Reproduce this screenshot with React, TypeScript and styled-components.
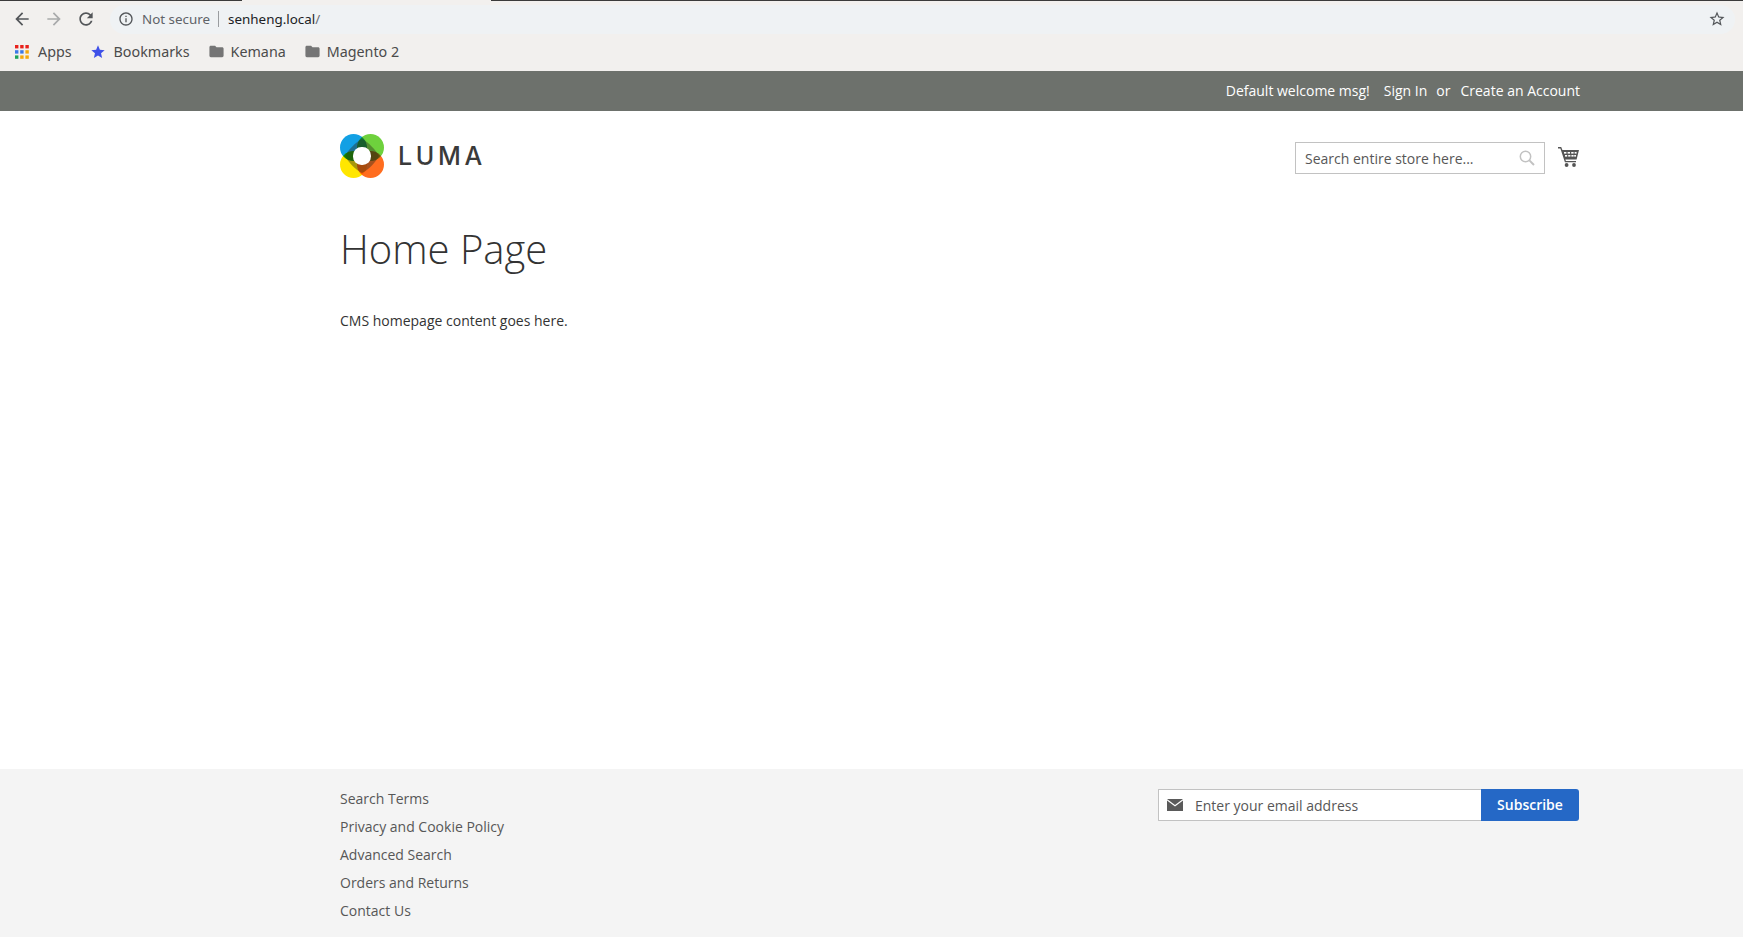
import React from 'react';
import styled, { createGlobalStyle } from 'styled-components';

const GlobalStyle = createGlobalStyle`
  html, body {
    margin: 0;
    padding: 0;
    background: #fff;
  }
  body {
    font-family: 'Open Sans', 'Noto Sans', sans-serif;
    font-size: 14px;
    color: #333;
  }
  * {
    box-sizing: border-box;
  }
`;

const Page = styled.div`
  display: flex;
  flex-direction: column;
  width: 1743px;
  height: 937px;
  overflow: hidden;
`;

const Browser = styled.div`
  flex: none;
  height: 71px;
  background: #f2f0ee;
  display: flex;
  flex-direction: column;
`;

const TabStrip = styled.div`
  height: 1px;
  display: flex;
  justify-content: space-between;
`;

const TabEdge = styled.div<{ $width: number }>`
  width: ${(p) => p.$width}px;
  background: #3b3b3b;
`;

const Toolbar = styled.div`
  height: 36px;
  display: flex;
  align-items: center;
  padding: 0 8px 0 12px;
`;

const NavButton = styled.span<{ $muted?: boolean }>`
  width: 20px;
  height: 20px;
  margin-right: 12px;
  display: flex;
  color: ${(p) => (p.$muted ? '#a9aaab' : '#535659')};
`;

const Omnibox = styled.div`
  flex: 1;
  height: 29px;
  margin-left: 2px;
  padding: 0 16px 0 8px;
  border-radius: 15px;
  background: #eff2f4;
  display: flex;
  align-items: center;
  font-family: 'Noto Sans', sans-serif;
  font-size: 13.4px;
`;

const InfoSlot = styled.span`
  width: 16px;
  height: 16px;
  display: flex;
  color: #535659;
`;

const StarSlot = styled.span`
  width: 18px;
  height: 18px;
  margin: 0 -7px 0 auto;
  display: flex;
  color: #535659;
`;

const Security = styled.span`
  margin-left: 8px;
  padding-right: 8px;
  border-right: 1px solid #9a9da0;
  line-height: 16px;
  color: #5f6368;
`;

const Host = styled.span`
  margin-left: 9px;
  color: #202124;
`;

const Path = styled.span`
  color: #6b6e72;
`;

const BookmarkBar = styled.div`
  height: 34px;
  display: flex;
  align-items: center;
  padding: 0 0 5px 15px;
  gap: 18px;
  font-family: 'Noto Sans', sans-serif;
  font-size: 14.3px;
  color: #4b4b4b;
`;

const Bookmark = styled.span<{ $gap?: number }>`
  display: flex;
  align-items: center;
  gap: ${(p) => p.$gap ?? 8}px;
`;

const BookmarkIcon = styled.span<{ $color: string }>`
  display: flex;
  color: ${(p) => p.$color};
`;

const Panel = styled.div`
  flex: none;
  height: 40px;
  background: #6d716c;
  color: #fff;
  padding: 0 163px 2px 340px;
  display: flex;
  justify-content: flex-end;
  align-items: center;
  gap: 10px;
`;

const PanelText = styled.span<{ $gap?: number }>`
  margin-right: ${(p) => p.$gap ?? 0}px;
`;

const Header = styled.header`
  flex: none;
  height: 113px;
  padding: 23px 164px 0 340px;
  display: flex;
  justify-content: space-between;
  align-items: flex-start;
`;

const Logo = styled.div`
  display: flex;
  align-items: center;
  gap: 14px;
`;

const LogoWord = styled.span`
  font-family: Inter, Lato, sans-serif;
  font-size: 25px;
  font-weight: 500;
  letter-spacing: 3.7px;
  line-height: 40px;
  color: #3a3a3a;
`;

const HeaderTools = styled.div`
  display: flex;
  align-items: flex-start;
  gap: 13px;
  padding-top: 8px;
`;

const CartSlot = styled.span`
  display: flex;
  padding-top: 4px;
`;

const SearchBox = styled.div`
  width: 250px;
  height: 32px;
  border: 1px solid #c2c2c2;
  background: #fff;
  padding: 0 9px;
  display: flex;
  align-items: center;
`;

const Field = styled.input`
  flex: 1;
  min-width: 0;
  border: 0;
  outline: 0;
  padding: 0;
  background: transparent;
  font-family: 'Open Sans', sans-serif;
  font-size: 14px;
  &::placeholder {
    color: #575757;
    opacity: 1;
  }
`;

const Main = styled.main`
  flex: 1;
  padding: 0 164px 0 340px;
`;

const Title = styled.h1`
  margin: 0 0 37px;
  font-size: 40px;
  font-weight: 300;
  line-height: 50px;
  color: #333;
`;

const Copy = styled.p`
  margin: 0;
  line-height: 20px;
`;

const Footer = styled.footer`
  flex: none;
  height: 168px;
  background: #f4f4f4;
  padding: 16px 164px 0 340px;
  display: flex;
  justify-content: space-between;
  align-items: flex-start;
`;

const FooterLinks = styled.ul`
  margin: 0;
  padding: 0;
  list-style: none;
`;

const FooterLink = styled.li`
  line-height: 28px;
  color: #575757;
`;

const Subscribe = styled.form`
  width: 421px;
  height: 32px;
  margin-top: 4px;
  display: flex;
`;

const EmailBox = styled.div`
  flex: 1;
  border: 1px solid #c2c2c2;
  border-right: 0;
  border-radius: 1px 0 0 1px;
  background: #fff;
  padding: 0 0 0 8px;
  display: flex;
  align-items: center;
  gap: 12px;
`;

const SubscribeButton = styled.button`
  width: 98px;
  border: 0;
  border-radius: 0 3px 3px 0;
  background: #2568c6;
  color: #fff;
  padding: 0 0 2px;
  font-family: 'Open Sans', sans-serif;
  font-size: 14px;
  font-weight: 600;
`;

const MarkSvg = styled.svg`
  isolation: isolate;
  .petal {
    mix-blend-mode: multiply;
  }
`;

function MaterialIcon({ d, size = 20 }: { d: string; size?: number }) {
  return (
    <svg width={size} height={size} viewBox="0 0 24 24" fill="currentColor">
      <path d={d} />
    </svg>
  );
}

const ARROW_BACK = 'M20 11H7.83l5.59-5.59L12 4l-8 8 8 8 1.41-1.41L7.83 13H20v-2z';
const ARROW_FORWARD = 'M4 11h12.17l-5.59-5.59L12 4l8 8-8 8-1.41-1.41L16.17 13H4v-2z';
const RELOAD =
  'M17.65 6.35C16.2 4.9 14.21 4 12 4c-4.42 0-7.99 3.58-7.99 8s3.57 8 7.99 8c3.73 0 6.84-2.55 7.73-6h-2.08c-.82 2.33-3.04 4-5.65 4-3.31 0-6-2.69-6-6s2.69-6 6-6c1.66 0 3.14.69 4.22 1.78L13 11h7V4l-2.35 2.35z';
const INFO =
  'M11 7h2v2h-2zm0 4h2v6h-2zm1-9C6.48 2 2 6.48 2 12s4.48 10 10 10 10-4.48 10-10S17.52 2 12 2zm0 18c-4.41 0-8-3.59-8-8s3.59-8 8-8 8 3.59 8 8-3.59 8-8 8z';
const STAR_OUTLINE =
  'M22 9.24l-7.19-.62L12 2 9.19 8.63 2 9.24l5.46 4.73L5.82 21 12 17.27 18.18 21l-1.63-7.03L22 9.24zM12 15.4l-3.76 2.27 1-4.28-3.32-2.88 4.38-.38L12 6.1l1.71 4.04 4.38.38-3.32 2.88 1 4.28L12 15.4z';
const STAR = 'M12 17.27L18.18 21l-1.64-7.03L22 9.24l-7.19-.61L12 2 9.19 8.63 2 9.24l5.46 4.73L5.82 21z';
const FOLDER =
  'M10 4H4c-1.1 0-1.99.9-1.99 2L2 18c0 1.1.9 2 2 2h16c1.1 0 2-.9 2-2V8c0-1.1-.9-2-2-2h-8l-2-2z';

function AppsIcon() {
  const colors = ['#e8211b', '#e8211b', '#e8211b', '#3b78e7', '#3b78e7', '#f4a80c', '#1da45a', '#f4a80c', '#f4a80c'];
  return (
    <svg width="14" height="14" viewBox="0 0 14 14">
      {colors.map((c, i) => (
        <rect key={i} x={(i % 3) * 5.2} y={Math.floor(i / 3) * 5.2} width="3.4" height="3.4" fill={c} />
      ))}
    </svg>
  );
}

function LumaMark() {
  return (
    <MarkSvg width="44" height="44" viewBox="0 0 44 44">
      <circle className="petal" cx="13.5" cy="13.5" r="13.5" fill="#12a0e4" />
      <circle className="petal" cx="30.5" cy="13.5" r="13.5" fill="#6ed13d" />
      <circle className="petal" cx="13.5" cy="30.5" r="13.5" fill="#ffe600" />
      <circle className="petal" cx="30.5" cy="30.5" r="13.5" fill="#ff6d1f" />
      <path
        d="M22 5C28 8 36 16 39 22C36 28 28 36 22 39C16 36 8 28 5 22C8 16 16 8 22 5Z"
        fill="#2e2a1c"
        opacity="0.42"
      />
      <rect x="13" y="13" width="18" height="18" rx="8.5" fill="#fff" />
    </MarkSvg>
  );
}

function SearchIcon() {
  return (
    <svg width="16" height="16" viewBox="0 0 16 16" fill="none" stroke="#c2c2c2" strokeWidth="1.5">
      <circle cx="6.5" cy="6.5" r="5.2" />
      <path d="M10.4 10.4L15 15" strokeWidth="2" />
    </svg>
  );
}

function CartIcon() {
  return (
    <svg width="21" height="21" viewBox="0 0 21 21" fill="#555">
      <path d="M0 1h3.2l1.2 3H21l-2.4 9.5H7.4l.5 1.5H18v1.3H6.9L2.4 2.4H0z" />
      <g fill="#fff">
        <rect x="6" y="6" width="2.4" height="1.6" />
        <rect x="9.6" y="6" width="2.4" height="1.6" />
        <rect x="13.2" y="6" width="2.4" height="1.6" />
        <rect x="16.6" y="6" width="2" height="1.6" />
        <rect x="7" y="9" width="2.2" height="1.6" />
        <rect x="10.2" y="9" width="2.2" height="1.6" />
        <rect x="13.4" y="9" width="2.2" height="1.6" />
        <rect x="16.2" y="9" width="1.8" height="1.6" />
      </g>
      <circle cx="8.6" cy="19" r="1.9" />
      <circle cx="16" cy="19" r="1.9" />
    </svg>
  );
}

function MailIcon() {
  return (
    <svg width="16" height="12" viewBox="0 0 16 12" fill="#5a5a5a">
      <path d="M0 0h16L8 6z" />
      <path d="M0 1.6l8 6 8-6V12H0z" />
    </svg>
  );
}

export default function App() {
  return (
    <Page>
      <GlobalStyle />
      <Browser>
        <TabStrip>
          <TabEdge $width={242} />
          <TabEdge $width={1252} />
        </TabStrip>
        <Toolbar>
          <NavButton>
            <MaterialIcon d={ARROW_BACK} />
          </NavButton>
          <NavButton $muted>
            <MaterialIcon d={ARROW_FORWARD} />
          </NavButton>
          <NavButton>
            <MaterialIcon d={RELOAD} />
          </NavButton>
          <Omnibox>
            <InfoSlot>
              <MaterialIcon d={INFO} size={16} />
            </InfoSlot>
            <Security>Not secure</Security>
            <Host>senheng.local</Host>
            <Path>/</Path>
            <StarSlot>
              <MaterialIcon d={STAR_OUTLINE} size={18} />
            </StarSlot>
          </Omnibox>
        </Toolbar>
        <BookmarkBar>
          <Bookmark $gap={9}>
            <AppsIcon />
            Apps
          </Bookmark>
          <Bookmark>
            <BookmarkIcon $color="#3f51e8">
              <MaterialIcon d={STAR} size={16} />
            </BookmarkIcon>
            Bookmarks
          </Bookmark>
          <Bookmark $gap={6}>
            <BookmarkIcon $color="#757575">
              <MaterialIcon d={FOLDER} size={17} />
            </BookmarkIcon>
            Kemana
          </Bookmark>
          <Bookmark $gap={6}>
            <BookmarkIcon $color="#757575">
              <MaterialIcon d={FOLDER} size={17} />
            </BookmarkIcon>
            Magento 2
          </Bookmark>
        </BookmarkBar>
      </Browser>
      <Panel>
        <PanelText $gap={4}>Default welcome msg!</PanelText>
        <PanelText $gap={-1}>Sign In</PanelText>
        <PanelText>or</PanelText>
        <PanelText>Create an Account</PanelText>
      </Panel>
      <Header>
        <Logo>
          <LumaMark />
          <LogoWord>LUMA</LogoWord>
        </Logo>
        <HeaderTools>
          <SearchBox>
            <Field placeholder="Search entire store here..." />
            <SearchIcon />
          </SearchBox>
          <CartSlot>
            <CartIcon />
          </CartSlot>
        </HeaderTools>
      </Header>
      <Main>
        <Title>Home Page</Title>
        <Copy>CMS homepage content goes here.</Copy>
      </Main>
      <Footer>
        <FooterLinks>
          <FooterLink>Search Terms</FooterLink>
          <FooterLink>Privacy and Cookie Policy</FooterLink>
          <FooterLink>Advanced Search</FooterLink>
          <FooterLink>Orders and Returns</FooterLink>
          <FooterLink>Contact Us</FooterLink>
        </FooterLinks>
        <Subscribe>
          <EmailBox>
            <MailIcon />
            <Field placeholder="Enter your email address" />
          </EmailBox>
          <SubscribeButton type="button">Subscribe</SubscribeButton>
        </Subscribe>
      </Footer>
    </Page>
  );
}
